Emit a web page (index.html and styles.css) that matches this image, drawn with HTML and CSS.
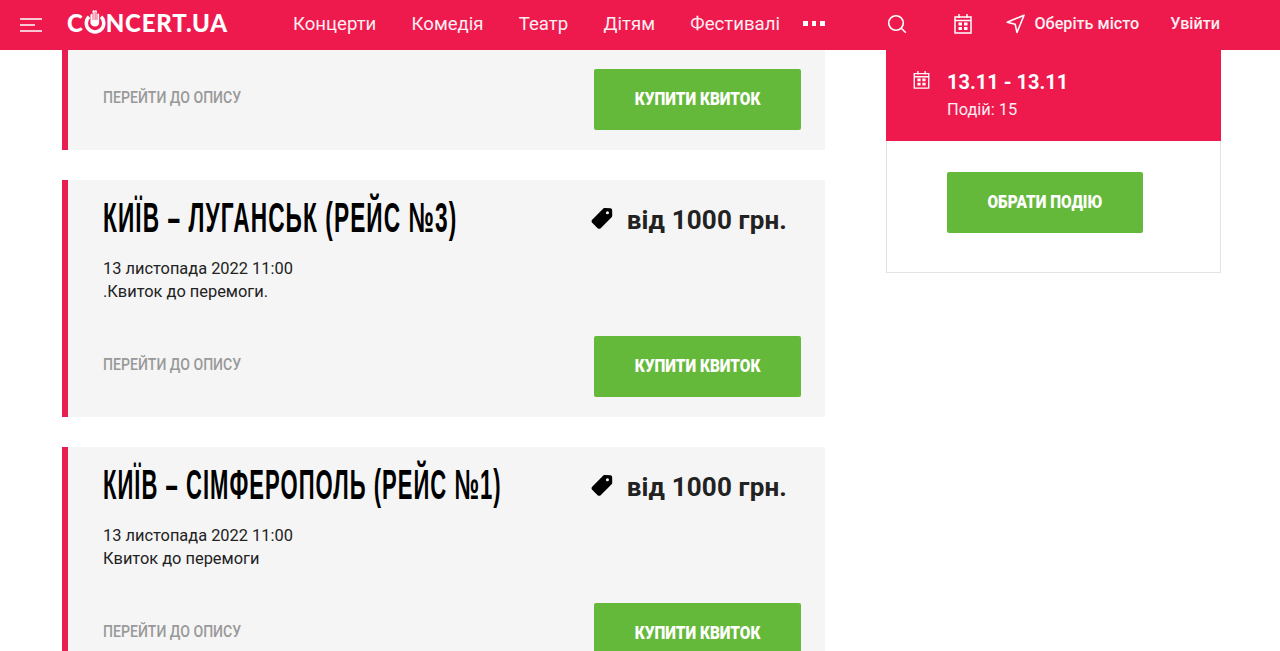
FILE: index.html
```html
<!DOCTYPE html>
<html lang="uk">
<head>
<meta charset="utf-8">
<title>Concert.ua</title>
<link rel="stylesheet" href="styles.css">
</head>
<body>
<header class="topbar">
  <button class="burger" aria-label="Меню">
    <svg width="22" height="14" viewBox="0 0 22 14"><path d="M0 1h22M0 7h15M0 13h22" stroke="#fff" stroke-width="1.6" fill="none"/></svg>
  </button>
  <a class="logo">C<svg class="logo-o" width="24" height="28" viewBox="0 0 24 28"><path d="M5.500 10.500A9.500 9.500 0 1 0 18.500 10.500" fill="none" stroke="#fff" stroke-width="3.800"/><path d="M7 17V8.500a1.300 1.300 0 0 1 2.200-.8V4.500a1.300 1.300 0 0 1 2.400-.5 1.300 1.300 0 0 1 2.400.5v3.200a1.300 1.300 0 0 1 2.500 1V17c0 2.500-2 4-4.500 4S7 19.500 7 17z" fill="#fff"/><path d="M9.800 6v8M12.100 5v9M14.100 6v8" stroke="#ee1a4e" stroke-width=".8"/></svg>NCERT.UA</a>
  <nav class="nav">
    <a>Концерти</a><a>Комедія</a><a>Театр</a><a>Дітям</a><a>Фестивалі</a>
    <span class="dots"><i></i><i></i><i></i></span>
  </nav>
  <div class="tools">
    <svg class="ic-search" width="20" height="20" viewBox="0 0 20 20"><circle cx="9" cy="9" r="7.300" fill="none" stroke="#fff" stroke-width="1.600"/><path d="M14.300 14.300l4.500 4.500" stroke="#fff" stroke-width="1.600"/></svg>
    <svg class="ic-cal" width="18" height="21" viewBox="0 0 18 21"><path d="M1 4h16v16H1zM5 1v4M13 1v4M1 7.500h16" fill="none" stroke="#fff" stroke-width="1.500"/><path d="M4.500 9.500h3.500v3H4.500zM10 9.500h3.500v3H10zM4.500 14h3.500v3H4.500zM10 14h3.500v3H10z" fill="#fff"/></svg>
    <a class="city"><svg width="19" height="20" viewBox="0 0 19 20"><path d="M1.200 8.200L18 1.200 11 18.500 9.200 10.300z" fill="none" stroke="#fff" stroke-width="1.600" stroke-linejoin="round"/></svg>Оберіть місто</a>
    <a class="login">Увійти</a>
  </div>
</header>
<div class="page">
  <main class="list">
    <article class="card">
      <div class="card-foot">
        <a class="more"><span class="narrow">ПЕРЕЙТИ ДО ОПИСУ</span></a>
        <a class="btn btn-buy"><span class="btn-text">КУПИТИ КВИТОК</span></a>
      </div>
    </article>
    <article class="card">
      <div class="card-head">
        <h2 class="title"><span class="title-text">КИЇВ – ЛУГАНСЬК (РЕЙС №3)</span></h2>
        <div class="price"><svg class="tag" width="24" height="24" viewBox="0 0 22 22"><path d="M2 12.500L12 2.500c.5-.5 1-.6 1.600-.6l5 .2c1 0 1.700.8 1.700 1.700l.1 5c0 .6-.2 1.200-.6 1.600L9.800 20.300c-.8.800-2 .8-2.800 0l-5-5c-.8-.8-.8-2 0-2.800z" fill="#000"/><circle cx="16" cy="6.200" r="1.400" fill="#f5f5f5"/></svg>від 1000 грн.</div>
      </div>
      <p class="meta">13 листопада 2022 11:00<br>.Квиток до перемоги.</p>
      <div class="card-foot">
        <a class="more"><span class="narrow">ПЕРЕЙТИ ДО ОПИСУ</span></a>
        <a class="btn btn-buy"><span class="btn-text">КУПИТИ КВИТОК</span></a>
      </div>
    </article>
    <article class="card">
      <div class="card-head">
        <h2 class="title"><span class="title-text title-long">КИЇВ – СІМФЕРОПОЛЬ (РЕЙС №1)</span></h2>
        <div class="price"><svg class="tag" width="24" height="24" viewBox="0 0 22 22"><path d="M2 12.500L12 2.500c.5-.5 1-.6 1.600-.6l5 .2c1 0 1.700.8 1.700 1.700l.1 5c0 .6-.2 1.200-.6 1.600L9.800 20.300c-.8.800-2 .8-2.800 0l-5-5c-.8-.8-.8-2 0-2.800z" fill="#000"/><circle cx="16" cy="6.200" r="1.400" fill="#f5f5f5"/></svg>від 1000 грн.</div>
      </div>
      <p class="meta">13 листопада 2022 11:00<br>Квиток до перемоги</p>
      <div class="card-foot">
        <a class="more"><span class="narrow">ПЕРЕЙТИ ДО ОПИСУ</span></a>
        <a class="btn btn-buy"><span class="btn-text">КУПИТИ КВИТОК</span></a>
      </div>
    </article>
  </main>
  <aside class="side">
    <div class="side-top">
      <svg width="17" height="19" viewBox="0 0 18 21"><path d="M1 4h16v16H1zM5 1v4M13 1v4M1 7.500h16" fill="none" stroke="#fff" stroke-width="1.500"/><path d="M4.500 9.500h3.500v3H4.500zM10 9.500h3.500v3H10zM4.500 14h3.500v3H4.500zM10 14h3.500v3H10z" fill="#fff"/></svg>
      <div>
        <div class="side-date">13.11 - 13.11</div>
        <div class="side-count">Подій: 15</div>
      </div>
    </div>
    <div class="side-body">
      <a class="btn btn-pick"><span class="btn-text">ОБРАТИ ПОДІЮ</span></a>
    </div>
  </aside>
</div>
</body>
</html>
```
FILE: styles.css
```css
* { box-sizing: border-box; }
html, body { margin: 0; height: 651px; overflow: hidden; background: #fff; }
body { font-family: Roboto, "Liberation Sans", sans-serif; color: #222; }
.topbar {
  height: 50px;
  background: #ee1a4e;
  color: #fff;
  display: flex;
  align-items: center;
  padding: 0 60px 3px 20px;
  position: relative;
  z-index: 2;
}
.burger { background: none; border: 0; padding: 0; width: 22px; height: 14px; display: flex; margin-top: 2px; }
.logo {
  font-family: Lato, "Open Sans", sans-serif;
  font-weight: 900;
  font-size: 24px;
  letter-spacing: .8px;
  margin-left: 25px;
  margin-top: -2px;
  display: flex;
  align-items: center;
  width: 161px;
  height: 30px;
  white-space: nowrap;
}
.logo-o { margin: -6px 0 0 0; }
.nav { display: flex; align-items: center; gap: 35.300px; margin-left: 65px; font-size: 18.6px; }
.nav a { color: #fdeef2; white-space: nowrap; }
.dots { display: flex; gap: 4px; margin-left: -12px; }
.dots i { width: 4.500px; height: 4.500px; background: #fff; display: block; }
.tools { display: flex; align-items: center; margin-left: auto; }
.ic-search { margin-top: 1px; }
.ic-cal { margin-left: 47px; margin-top: -1px; }
.city { display: flex; align-items: center; gap: 9px; font-size: 16.200px; font-weight: 500; margin-left: 34px; white-space: nowrap; color: #fdeef2; }
.login { font-size: 16.200px; font-weight: 500; margin-left: 31px; color: #fdeef2; }
.page { display: flex; align-items: flex-start; padding-left: 62px; }
.list { width: 763px; display: flex; flex-direction: column; gap: 30px; }
.card { background: #f5f5f5; border-left: 6px solid #e91e50; padding: 0 24px 20px 35px; }
.card-head { display: flex; align-items: center; height: 76px; }
.title {
  flex: 1;
  width: 0;
  margin: -1px 0 0;
  font-family: "Liberation Sans", sans-serif;
  font-weight: 700;
  font-size: 42px;
  line-height: 44px;
  letter-spacing: 2px;
  color: #000;
  white-space: nowrap;
}
.title-text { display: inline-block; transform: scaleX(.54); transform-origin: left center; }
.title-long { transform: scaleX(.524); }
.price { display: flex; align-items: center; gap: 13px; font-size: 26px; letter-spacing: .15px; font-weight: 700; color: #222; margin-right: 14px; margin-top: 3px; white-space: nowrap; }
.tag { margin-top: -4px; }
.meta { font-size: 16.400px; line-height: 23px; margin: 0; color: #222; height: 80px; padding-top: 1px; }
.card-foot { display: flex; justify-content: space-between; align-items: center; height: 61px; }
.card:first-child .card-foot { margin-top: 19px; }
.more { font-size: 16px; font-weight: 500; color: #999; margin-top: -5px; white-space: nowrap; }
.narrow { display: inline-block; transform: scaleX(.88); transform-origin: left center; }
.btn {
  display: flex; align-items: center; justify-content: center;
  background: #65b93a; color: #fff; height: 61px; border-radius: 2px;
  font-weight: 900; font-size: 19px;
}
.btn-text { display: inline-block; transform: scaleX(.81); white-space: nowrap; margin-top: -3px; }
.btn-buy { width: 207px; }
.btn-pick { width: 196px; }
.side { width: 335px; margin-left: 61px; }
.side-top { background: #ee1a4e; color: #fff; height: 91px; padding: 20px 0 0 27px; display: flex; gap: 17px; align-items: flex-start; }
.side-date { font-size: 20px; font-weight: 700; line-height: 24px; }
.side-count { font-size: 16.400px; margin-top: 6px; color: #fdeef2; }
.side-body { border: 1px solid #e3e3e3; border-top: 0; height: 132px; padding: 31px 0 0 60px; }
```
